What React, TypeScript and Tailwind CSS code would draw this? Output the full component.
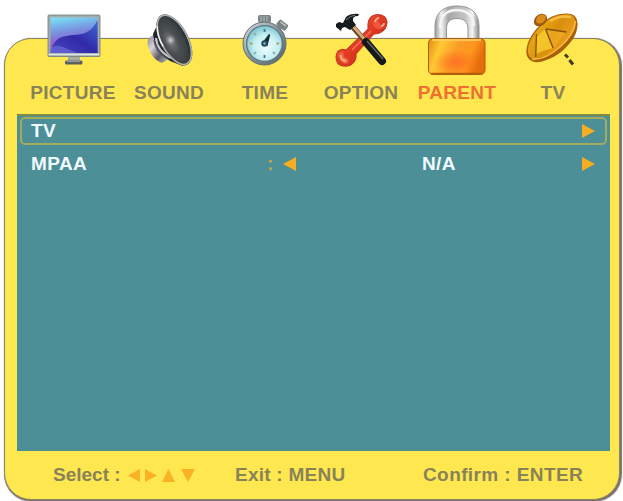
import type { ReactNode } from "react";
import clsx from "clsx";

interface Tab {
	label: string,
	icon: ReactNode,
	active?: boolean,
}

type Direction = "left" | "right" | "up" | "down";

const arrowPoints: Record<Direction, string> = {
	left: "13,0 13,14 0,7",
	right: "0,0 0,14 13,7",
	up: "0,14 13,14 6.5,0",
	down: "0,0 13,0 6.5,14",
};

const Arrow = ({ dir, className }: { dir: Direction, className?: string }) => (
	<svg viewBox="0 0 13 14" preserveAspectRatio="none" className={clsx("shrink-0", className)}>
		<polygon points={arrowPoints[dir]} fill="currentColor" />
	</svg>
);

const MonitorIcon = () => (
	<svg viewBox="0 0 96 80" className="h-20 w-24">
		<defs>
			<linearGradient id="screen" x1="0.1" y1="0" x2="0.3" y2="1">
				<stop offset="0" stopColor="#79e3f5" />
				<stop offset="0.4" stopColor="#7795e0" />
				<stop offset="0.75" stopColor="#9557cc" />
				<stop offset="1" stopColor="#6c50c4" />
			</linearGradient>
			<linearGradient id="wave" x1="1" y1="0" x2="0" y2="1">
				<stop offset="0" stopColor="#3d6bd0" />
				<stop offset="0.5" stopColor="#302aa8" />
				<stop offset="1" stopColor="#4a45bd" />
			</linearGradient>
		</defs>
		<rect x="22" y="15" width="52" height="41.5" rx="1" fill="#a4acae" stroke="#6e797b" strokeWidth="0.8" />
		<rect x="24.5" y="17.5" width="47" height="35.5" fill="url(#screen)" />
		<path d="M27 45C33 35 38 37 46 35C60 35 67 30 71.5 20V53H24.5Z" fill="url(#wave)" />
		<path d="M24.5 53V48Q30 44 37 47T51 53Z" fill="#6b69d8" opacity="0.7" />
		<path d="M22.5 54.5H73.5" stroke="#e1e5df" strokeWidth="1.5" />
		<path d="M42 57H54V61H42Z" fill="#a9aaa3" />
		<rect x="39" y="60.5" width="17.5" height="4" rx="1.5" fill="#59605e" />
		<path d="M41 61.3H54" stroke="#aaa" />
	</svg>
);

const SpeakerIcon = () => (
	<svg viewBox="0 0 96 80" className="h-20 w-24">
		<defs>
			<linearGradient id="magnet" x1="0" y1="0" x2="1" y2="1">
				<stop offset="0" stopColor="#777581" />
				<stop offset="0.35" stopColor="#d9d5df" />
				<stop offset="0.65" stopColor="#5c5a63" />
				<stop offset="1" stopColor="#c8c8ca" />
			</linearGradient>
			<radialGradient id="cone" cx="0.35" cy="0.5" r="0.65">
				<stop offset="0" stopColor="#797c7d" />
				<stop offset="0.4" stopColor="#4a4e50" />
				<stop offset="0.75" stopColor="#3b4042" />
				<stop offset="1" stopColor="#22282a" />
			</radialGradient>
			<radialGradient id="coneCap">
				<stop offset="0" stopColor="#dadada" />
				<stop offset="1" stopColor="#888" stopOpacity="0" />
			</radialGradient>
		</defs>
		<path d="M34 33L27 38Q24 42 27 49Q31 60 40 63L47 59L42 39Z" fill="url(#magnet)" />
		<path d="M36 23L31 34Q32 45 39 54L48 61L61 66Z" fill="#24262b" />
		<path d="M34 38Q35 51 49 58" fill="none" stroke="#c2c4c8" strokeWidth="2.2" />
		<path d="M32 40Q33 51 44 58" fill="none" stroke="#535760" strokeWidth="1.5" />
		<g transform="rotate(-28 53 40)">
			<ellipse cx="52.5" cy="39.5" rx="14" ry="28" fill="#4d5355" />
			<ellipse cx="52.5" cy="39.5" rx="13" ry="27" fill="url(#cone)" stroke="#abafb0" strokeWidth="1.6" />
			<path d="M39.5 40Q39 28 44 19" fill="none" stroke="#f0f0ee" strokeWidth="1.5" />
			<ellipse cx="49" cy="38" rx="5.5" ry="6" fill="url(#coneCap)" />
		</g>
	</svg>
);

const StopwatchIcon = () => (
	<svg viewBox="0 0 96 80" className="h-20 w-24">
		<defs>
			<linearGradient id="steel" x1="0" y1="0" x2="1" y2="1">
				<stop offset="0" stopColor="#dce2e3" />
				<stop offset="0.5" stopColor="#829195" />
				<stop offset="1" stopColor="#536469" />
			</linearGradient>
			<radialGradient id="dial" cx="0.55" cy="0.6" r="0.6">
				<stop offset="0" stopColor="#effcfc" />
				<stop offset="0.6" stopColor="#c5eef3" />
				<stop offset="1" stopColor="#7cc7d3" />
			</radialGradient>
		</defs>
		<path d="M42 19H51V25H42Z" fill="#858f91" />
		<rect x="40" y="15" width="13" height="7.5" rx="2" fill="#7c8586" />
		<path d="M43 16V22M46 16V22M49 16V22" stroke="#b3baba" />
		<g transform="rotate(38 63 26)">
			<rect x="58" y="21" width="11" height="7" rx="1.5" fill="#798284" />
			<path d="M60 23H67" stroke="#c1c7c6" strokeWidth="1.5" />
			<path d="M61 28H65V32H61Z" fill="#667276" />
		</g>
		<circle cx="46.5" cy="43.5" r="21.5" fill="url(#steel)" stroke="#5d6c70" />
		<circle cx="46.5" cy="43.5" r="18.5" fill="#62777c" />
		<circle cx="46.5" cy="43.5" r="17.2" fill="url(#dial)" />
		<g strokeWidth="1.8">
			<path d="M46.5 29V32M46.5 55V58" stroke="#467580" />
			<path d="M32 43.5H34.5M58.5 43.5H61" stroke="#c39442" />
			<path d="M36 33L38 35M36 54L38 52M57 54L55 52" stroke="#8eaaab" />
		</g>
		<path d="M45 43L51.5 34.5L49 45Z" fill="#172e37" stroke="#172e37" strokeWidth="1.5" />
		<circle cx="46.5" cy="43.5" r="3.2" fill="#214957" />
		<circle cx="46.5" cy="43.5" r="1.2" fill="#73bdca" />
	</svg>
);

const ToolsIcon = () => (
	<svg viewBox="0 0 96 80" className="h-20 w-24">
		<defs>
			<linearGradient id="wrench" x1="0" y1="0" x2="1" y2="1">
				<stop offset="0" stopColor="#f76b45" />
				<stop offset="0.5" stopColor="#e03a22" />
				<stop offset="1" stopColor="#b82414" />
			</linearGradient>
		</defs>
		<path
			d="M32 50L54 29Q53 18 59 15.500Q66 13 71 17Q75 22 71 29Q67 34 60 34L42 54Q43 61 37 65Q30 68 24 64Q20 57 24 51Q28 48 32 50Z"
			fill="url(#wrench)"
			stroke="#c23420"
			strokeWidth="1"
		/>
		<path d="M59 23Q60 17 66 17L64 21L67 25L71 23Q70 29 64 29Q59 28 59 23Z" fill="#f2573d" />
		<path d="M61 22Q62 18 65 18M67 26Q70 26 70 23" fill="none" stroke="#f9b3a0" strokeWidth="1.5" />
		<path d="M24 55Q25 52 29 52L30 57L34 59Q36 62 32 64Q26 63 24 55Z" fill="#f2623d" />
		<path d="M27 55Q26 60 32 61" fill="none" stroke="#f9b078" strokeWidth="2" />
		<path d="M38 50L57 31" stroke="#fb765a" strokeWidth="1.5" />
		<path d="M38 26L52 42" stroke="#624128" strokeWidth="5.5" />
		<path d="M38 25L52 41" stroke="#d6aa75" strokeWidth="3" />
		<path d="M52 42L68 61" stroke="#151817" strokeWidth="8" strokeLinecap="round" />
		<path d="M53 41L69 59" stroke="#687069" strokeWidth="1.3" />
		<path d="M22 24L25 22L29 23L32 17Q37 13 45 14L44 16Q38 16 39 21L42 25L36 30L31 27L28 28L27 31L22 27Z" fill="#171b1d" />
		<path d="M32 20Q36 16 41 15" fill="none" stroke="#77807f" />
	</svg>
);

const PadlockIcon = () => (
	<svg viewBox="0 0 96 80" className="h-20 w-24">
		<defs>
			<linearGradient id="shackle" x1="0" y1="0" x2="1" y2="0">
				<stop offset="0" stopColor="#999" />
				<stop offset="0.14" stopColor="#f4f4f4" />
				<stop offset="0.3" stopColor="#a7a7a7" />
				<stop offset="0.7" stopColor="#c5c5c5" />
				<stop offset="0.85" stopColor="#f5f5f5" />
				<stop offset="1" stopColor="#888" />
			</linearGradient>
			<linearGradient id="lockBody" x1="0" y1="0" x2="1" y2="0.25">
				<stop offset="0" stopColor="#e18a12" />
				<stop offset="0.25" stopColor="#ffc933" />
				<stop offset="0.55" stopColor="#fb9b25" />
				<stop offset="0.8" stopColor="#ff961e" />
				<stop offset="1" stopColor="#e66d0a" />
			</linearGradient>
			<radialGradient id="lockGlow" cx="0.5" cy="0.5" r="0.5">
				<stop offset="0" stopColor="#ff6d23" stopOpacity="0.9" />
				<stop offset="1" stopColor="#ff6d23" stopOpacity="0" />
			</radialGradient>
		</defs>
		<path
			d="M25 39V27C25 12 34 6 47 6S69 12 69 27V39H58V29C58 22 54 18.5 47 18.5S36.5 22 36.5 29V39Z"
			fill="url(#shackle)"
			stroke="#959595"
		/>
		<path d="M30 28Q30 11 46 10Q63 10 64 26" fill="none" stroke="#f4f4f4" strokeWidth="2.5" />
		<rect x="18.5" y="38.5" width="56.5" height="36" rx="4.5" fill="url(#lockBody)" stroke="#a65e12" />
		<ellipse cx="46" cy="62" rx="22" ry="12" fill="url(#lockGlow)" />
		<path d="M22 40H71" stroke="#ffd16a" strokeWidth="1.5" />
		<path d="M21 73.5H72" stroke="#b95e0b" strokeWidth="1.5" />
	</svg>
);

const DishIcon = () => (
	<svg viewBox="0 0 96 80" className="h-20 w-24">
		<defs>
			<linearGradient id="dish" x1="0" y1="0.2" x2="1" y2="0.8">
				<stop offset="0" stopColor="#b96c07" />
				<stop offset="0.25" stopColor="#e5a417" />
				<stop offset="0.5" stopColor="#d9900d" />
				<stop offset="0.75" stopColor="#e89a1a" />
				<stop offset="1" stopColor="#a95b07" />
			</linearGradient>
		</defs>
		<path d="M59 54.5L62 57.5M63.5 60L67 64.5" stroke="#493a22" strokeWidth="3" />
		<path d="M21 56C19 49 22 40 28 32C34 24 41 18 49 15.500C57 13 66 12.500 69.500 17C73 22 72 31 67 39C62 46 56 52 50 55.500C42 60 34 63 29 62Q23 61 21 56Z" fill="#a86008" />
		<path d="M22 53C21 46 25 37 31 30C37 23 44 18 50 16C58 13.500 66 13 68.500 18C71 24 67 33 61 40C55 47 49 51 43 54C35 58 29 60 25 58Q23 57 22 53Z" fill="url(#dish)" />
		<path d="M26 59C35 60 46 54 54 47C62 40 69 30 69.500 21" fill="none" stroke="#f6bc3c" strokeWidth="1.6" />
		<path d="M31 37L39 29L47 48L37 51L30 54Z" fill="#ffdb35" opacity="0.65" />
		<path d="M40 29L60 32L48 48Z" fill="#efac24" opacity="0.7" />
		<path d="M30.500 34L29.700 57M39.500 29L47 48M40 29L60.500 32" fill="none" stroke="#895006" strokeWidth="1.3" />
		<path d="M44 21Q54 15 65 17" fill="none" stroke="#f8bd49" strokeWidth="2.500" />
		<ellipse cx="34.500" cy="20" rx="7.200" ry="5.500" fill="#9a590d" transform="rotate(-40 34.500 20)" />
		<ellipse cx="35" cy="19" rx="5.500" ry="3.800" fill="#d98b1c" transform="rotate(-40 35 19)" />
	</svg>
);

const tabs: Tab[] = [
	{ label: "PICTURE", icon: <MonitorIcon /> },
	{ label: "SOUND", icon: <SpeakerIcon /> },
	{ label: "TIME", icon: <StopwatchIcon /> },
	{ label: "OPTION", icon: <ToolsIcon /> },
	{ label: "PARENT", icon: <PadlockIcon />, active: true },
	{ label: "TV", icon: <DishIcon /> },
];

const App = () => {
	return (
		<div className="h-[501px] w-[623px] overflow-hidden bg-white pt-[38px] pl-1 font-['Liberation_Sans',Arial,sans-serif] font-bold">
			<div className="flex h-[462px] w-[616px] flex-col rounded-[27px] border border-[#888463] bg-[#ffe84f] px-3 shadow-[1px_1px_1px_1px_#79716b]">
				{/* icons stick out above the panel */}
				<div className="-mt-[39px] ml-[9px] grid h-[115px] w-[576px] shrink-0 grid-cols-6">
					{tabs.map((tab) => (
						<div key={tab.label} className="flex flex-col items-center">
							{tab.icon}
							<span className={clsx("mt-[2px] mr-[2px] text-[19px] leading-[22px] tracking-[0.3px]", tab.active ? "text-[#ee7132]" : "text-[#898259]")}>{tab.label}</span>
						</div>
					))}
				</div>
				<div className="-mt-px h-[337px] w-[593px] shrink-0 border-t-2 border-[#7c8b4b] bg-[#4c8f97] px-[3px] pt-px text-[19px] tracking-[0.4px] text-[#f1fbff]">
					<div className="flex h-[28px] items-center justify-between rounded-[5px] border-2 border-[#a4ab5c] pr-[10px] pl-[9px]">
						<span>TV</span>
						<Arrow dir="right" className="h-[14px] w-[13px] text-[#f5ad22]" />
					</div>
					<div className="mt-[3px] flex h-[32px] items-center pr-[12px] pl-[11px]">
						<span className="w-[236px]">MPAA</span>
						<span className="w-[16px] text-[#c1a642]">:</span>
						<Arrow dir="left" className="h-[14px] w-[13px] text-[#f5ad22]" />
						<span className="flex-1 pl-[126px]">N/A</span>
						<Arrow dir="right" className="h-[14px] w-[13px] text-[#f5ad22]" />
					</div>
				</div>
				<div className="flex h-[48px] items-center pt-[1px] pl-[36px] text-[19px] text-[#898259]">
					<span className="w-[75px] whitespace-nowrap">Select :</span>
					<div className="flex w-[107px] items-center gap-[5px] text-[#fbb124]">
						<Arrow dir="left" className="h-[13px] w-[12px]" />
						<Arrow dir="right" className="h-[13px] w-[12px]" />
						<Arrow dir="up" className="h-[13px] w-[13px]" />
						<Arrow dir="down" className="ml-px h-[13px] w-[14px]" />
					</div>
					<span className="w-[188px] tracking-[0.25px] whitespace-nowrap">Exit : MENU</span>
					<span className="tracking-[0.4px] whitespace-nowrap">Confirm : ENTER</span>
				</div>
			</div>
		</div>
	);
}

export default App;
